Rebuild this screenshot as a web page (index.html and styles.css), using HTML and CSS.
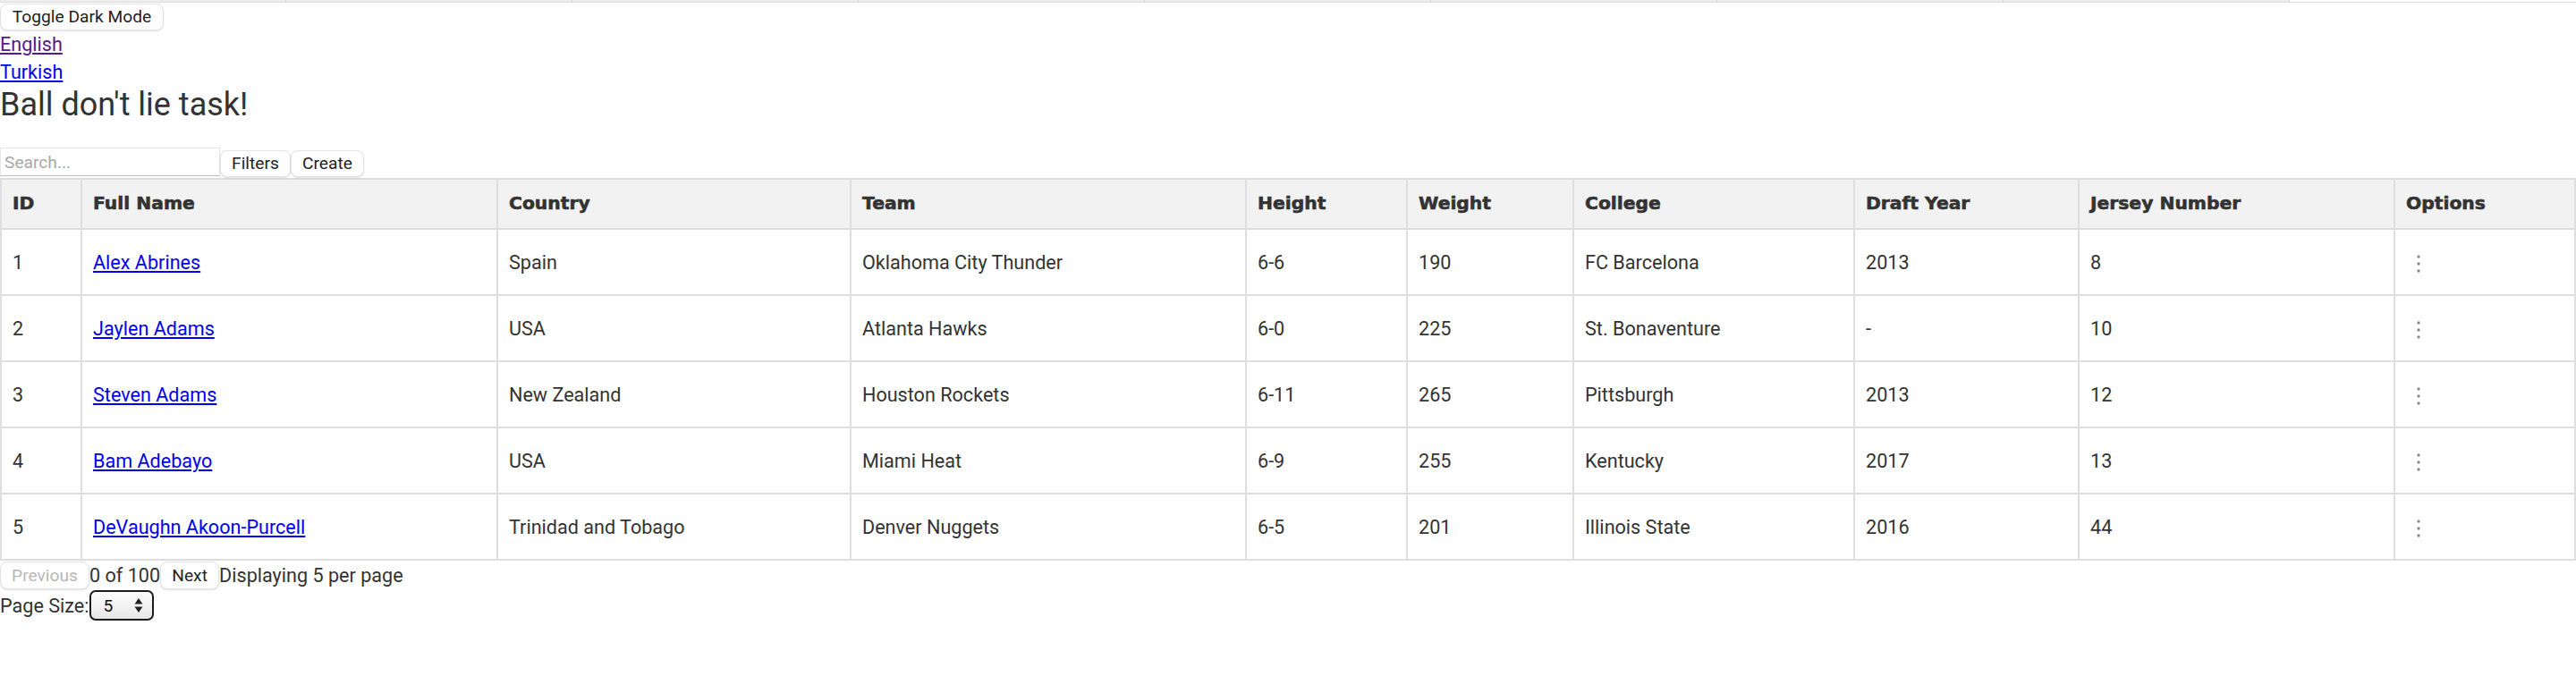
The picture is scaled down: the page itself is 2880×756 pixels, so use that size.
FILE: index.html
```html
<!DOCTYPE html>
<html lang="en">
<head>
<meta charset="utf-8">
<title>Ball don't lie task!</title>
<link rel="stylesheet" href="styles.css">
</head>
<body>
<div class="topband">
  <span></span><span></span><span></span><span></span><span></span><span></span><span></span><span></span><span class="rest"></span>
</div>
<button class="btn toggle">Toggle Dark Mode</button>
<div class="langs">
  <a href="#" class="visited">English</a>
  <a href="#">Turkish</a>
</div>
<h1>Ball don't lie task!</h1>
<div class="toolbar">
  <input class="search" type="text" placeholder="Search...">
  <button class="btn filters">Filters</button>
  <button class="btn create">Create</button>
</div>
<table class="players">
  <colgroup>
    <col style="width:90px"><col style="width:465px"><col style="width:395px"><col style="width:442px"><col style="width:180px"><col style="width:186px"><col style="width:314px"><col style="width:251px"><col style="width:353px"><col>
  </colgroup>
  <thead>
    <tr><th>ID</th><th>Full Name</th><th>Country</th><th>Team</th><th>Height</th><th>Weight</th><th>College</th><th>Draft Year</th><th>Jersey Number</th><th>Options</th></tr>
  </thead>
  <tbody>
    <tr><td>1</td><td><a href="#">Alex Abrines</a></td><td>Spain</td><td>Oklahoma City Thunder</td><td>6-6</td><td>190</td><td>FC Barcelona</td><td>2013</td><td>8</td><td><span class="dots"><svg width="6" height="22" viewBox="0 0 6 22"><circle cx="3" cy="3" r="1.7"/><circle cx="3" cy="11" r="1.7"/><circle cx="3" cy="19" r="1.7"/></svg></span></td></tr>
    <tr><td>2</td><td><a href="#">Jaylen Adams</a></td><td>USA</td><td>Atlanta Hawks</td><td>6-0</td><td>225</td><td>St. Bonaventure</td><td>-</td><td>10</td><td><span class="dots"><svg width="6" height="22" viewBox="0 0 6 22"><circle cx="3" cy="3" r="1.7"/><circle cx="3" cy="11" r="1.7"/><circle cx="3" cy="19" r="1.7"/></svg></span></td></tr>
    <tr><td>3</td><td><a href="#">Steven Adams</a></td><td>New Zealand</td><td>Houston Rockets</td><td>6-11</td><td>265</td><td>Pittsburgh</td><td>2013</td><td>12</td><td><span class="dots"><svg width="6" height="22" viewBox="0 0 6 22"><circle cx="3" cy="3" r="1.7"/><circle cx="3" cy="11" r="1.7"/><circle cx="3" cy="19" r="1.7"/></svg></span></td></tr>
    <tr><td>4</td><td><a href="#">Bam Adebayo</a></td><td>USA</td><td>Miami Heat</td><td>6-9</td><td>255</td><td>Kentucky</td><td>2017</td><td>13</td><td><span class="dots"><svg width="6" height="22" viewBox="0 0 6 22"><circle cx="3" cy="3" r="1.7"/><circle cx="3" cy="11" r="1.7"/><circle cx="3" cy="19" r="1.7"/></svg></span></td></tr>
    <tr><td>5</td><td><a href="#">DeVaughn Akoon-Purcell</a></td><td>Trinidad and Tobago</td><td>Denver Nuggets</td><td>6-5</td><td>201</td><td>Illinois State</td><td>2016</td><td>44</td><td><span class="dots"><svg width="6" height="22" viewBox="0 0 6 22"><circle cx="3" cy="3" r="1.7"/><circle cx="3" cy="11" r="1.7"/><circle cx="3" cy="19" r="1.7"/></svg></span></td></tr>
  </tbody>
</table>
<div class="pager">
  <button class="btn prev" disabled>Previous</button>
  <span class="count">0 of 100</span>
  <button class="btn next">Next</button>
  <span class="info">Displaying 5 per page</span>
</div>
<div class="pagesize">
  <span class="label">Page Size:</span>
  <span class="selectwrap">
    <select class="select"><option>5</option><option>10</option><option>20</option></select>
    <svg class="arrows" width="10" height="18" viewBox="0 0 10 18"><path d="M5 1 L9.5 7.5 H0.5 Z"/><path d="M5 17 L9.5 10.5 H0.5 Z"/></svg>
  </span>
</div>
</body>
</html>
```

FILE: styles.css
```css
* { box-sizing: border-box; }

body {
  margin: 0;
  font-family: Roboto, "Liberation Sans", Arial, sans-serif;
  font-size: 21.6px;
  color: #333;
  background: #fff;
}

.topband {
  display: flex;
  height: 3px;
  border-bottom: 1px solid #dcdcdc;
}
.topband span {
  width: 320px;
  flex: none;
  background: #ececec;
  border-right: 1px solid #d6d6d6;
}
.topband .rest {
  flex: 1;
  background: #fff;
  border-right: 0;
}

.btn {
  font-family: Roboto, "Liberation Sans", Arial, sans-serif;
  font-size: 19.2px;
  color: #222;
  background: #fff;
  border: 1px solid #e3e3e3;
  border-radius: 8px;
  box-shadow: 0 1px 2px rgba(0, 0, 0, 0.12);
  padding: 0 12px;
  height: 30px;
  line-height: 28px;
  margin: 0;
  cursor: pointer;
}

.toggle {
  display: block;
  margin-top: 1px;
  width: 183px;
}

.langs a {
  display: block;
  width: fit-content;
  line-height: 31px;
  color: #0000ee;
}
.langs a.visited { color: #551a8b; }

h1 {
  font-size: 36px;
  font-weight: 400;
  line-height: 42px;
  margin: 0 0 27px;
  color: #333;
}

.toolbar {
  display: flex;
  align-items: flex-end;
  margin-bottom: 1px;
}
.search {
  width: 246px;
  height: 32px;
  margin: 0 0 1px;
  border: 1px solid #e6e6e6;
  border-bottom: 1px solid #bdbdbd;
  font-family: Roboto, "Liberation Sans", Arial, sans-serif;
  font-size: 19.2px;
  padding: 0 4px;
  color: #333;
  outline: none;
}
.search::placeholder { color: #a9a9a9; }
.filters { width: 79px; height: 30px; }
.create { width: 82px; height: 30px; }

.players {
  width: 100%;
  border-collapse: collapse;
  table-layout: fixed;
}
.players th,
.players td {
  border: 2px solid #dedede;
  padding: 0 12px;
  text-align: left;
  vertical-align: middle;
  white-space: nowrap;
}
.players thead tr { height: 56px; }
.players tbody tr { height: 74px; }
.players th {
  background: #f2f2f2;
  font-family: "DejaVu Sans", "Liberation Sans", sans-serif;
  font-size: 20.3px;
  font-weight: 700;
  color: #333;
  -webkit-text-stroke: 0.6px #333;
  padding-bottom: 3px;
}
.players td a { color: #0000ee; }

.dots {
  display: inline-block;
  margin-left: 11px;
  vertical-align: middle;
}
.dots svg { display: block; fill: #8c8c8c; }

.pager {
  display: flex;
  align-items: center;
  height: 33px;
}
.prev {
  width: 100px;
  height: 31px;
  color: #b8b8b8;
  cursor: default;
}
.next {
  width: 66px;
  height: 31px;
}
.count, .info { white-space: nowrap; }

.pagesize {
  display: flex;
  align-items: center;
  height: 34px;
}
.selectwrap {
  position: relative;
  display: inline-block;
  margin-left: 1px;
}
.select {
  appearance: none;
  -webkit-appearance: none;
  width: 72px;
  height: 34px;
  border: 2px solid #1b1b1b;
  border-radius: 7px;
  background: linear-gradient(to bottom, #fbfbfb 0%, #f1f1f1 60%, #e6e6e6 100%);
  font-family: Roboto, "Liberation Sans", Arial, sans-serif;
  font-size: 19.2px;
  color: #111;
  padding: 0 0 0 13px;
  display: block;
}
.arrows {
  position: absolute;
  right: 12px;
  top: 8px;
  fill: #222;
  pointer-events: none;
}
```
